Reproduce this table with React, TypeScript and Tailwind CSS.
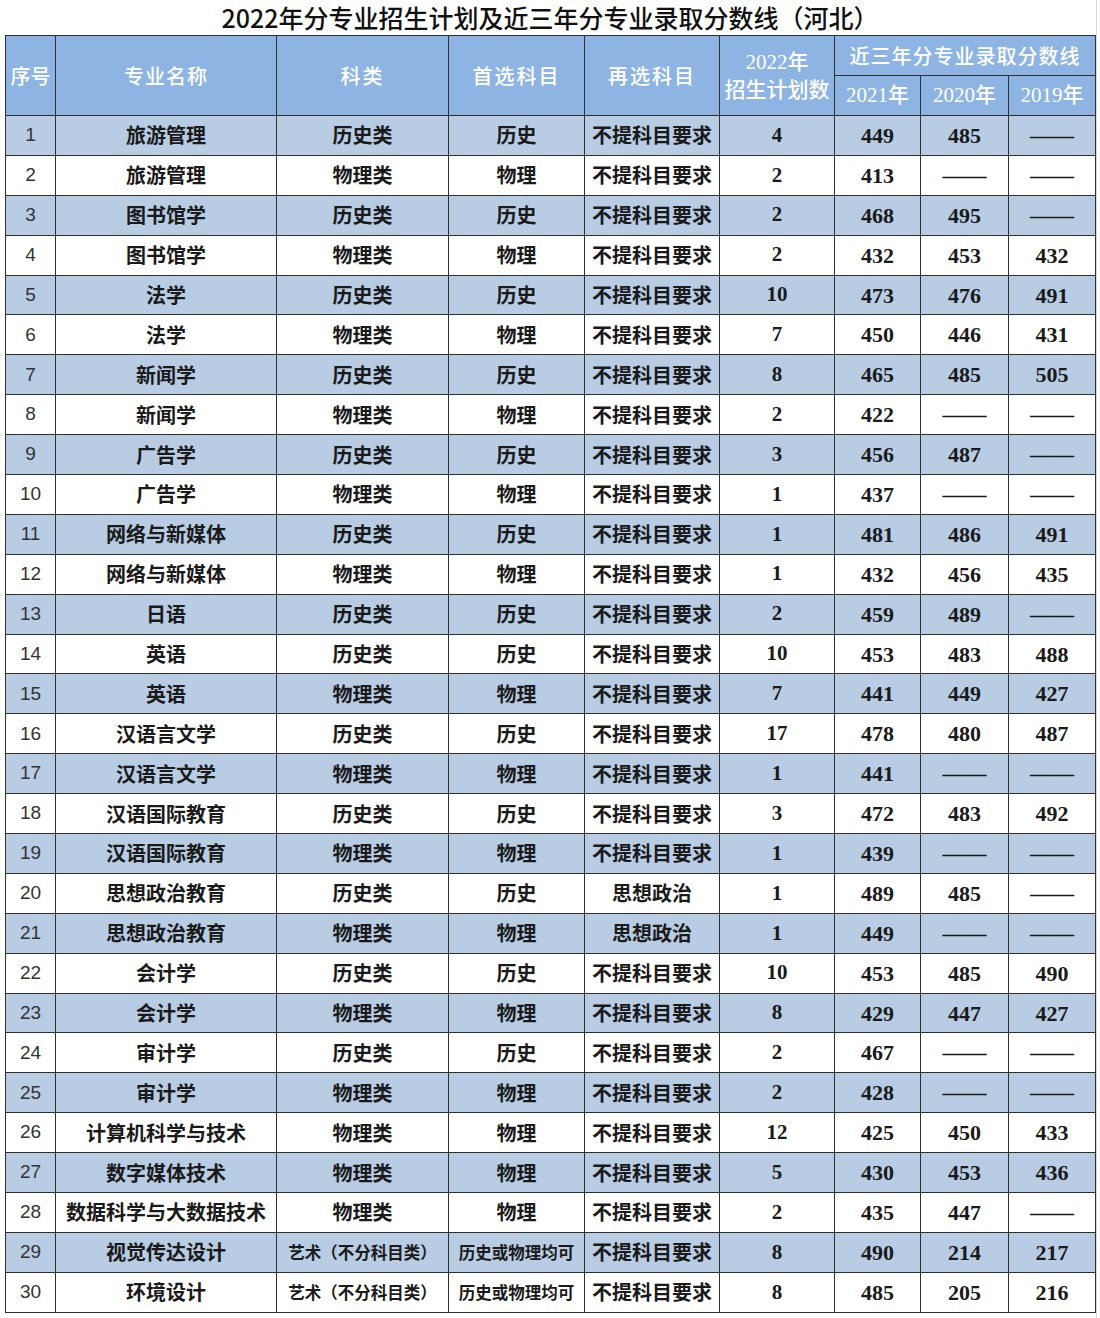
import { FC } from 'react';

type Row = [string, string, string, string, string, string, string, string];

const rows: Row[] = [
  ['旅游管理', '历史类', '历史', '不提科目要求', '4', '449', '485', '——'],
  ['旅游管理', '物理类', '物理', '不提科目要求', '2', '413', '——', '——'],
  ['图书馆学', '历史类', '历史', '不提科目要求', '2', '468', '495', '——'],
  ['图书馆学', '物理类', '物理', '不提科目要求', '2', '432', '453', '432'],
  ['法学', '历史类', '历史', '不提科目要求', '10', '473', '476', '491'],
  ['法学', '物理类', '物理', '不提科目要求', '7', '450', '446', '431'],
  ['新闻学', '历史类', '历史', '不提科目要求', '8', '465', '485', '505'],
  ['新闻学', '物理类', '物理', '不提科目要求', '2', '422', '——', '——'],
  ['广告学', '历史类', '历史', '不提科目要求', '3', '456', '487', '——'],
  ['广告学', '物理类', '物理', '不提科目要求', '1', '437', '——', '——'],
  ['网络与新媒体', '历史类', '历史', '不提科目要求', '1', '481', '486', '491'],
  ['网络与新媒体', '物理类', '物理', '不提科目要求', '1', '432', '456', '435'],
  ['日语', '历史类', '历史', '不提科目要求', '2', '459', '489', '——'],
  ['英语', '历史类', '历史', '不提科目要求', '10', '453', '483', '488'],
  ['英语', '物理类', '物理', '不提科目要求', '7', '441', '449', '427'],
  ['汉语言文学', '历史类', '历史', '不提科目要求', '17', '478', '480', '487'],
  ['汉语言文学', '物理类', '物理', '不提科目要求', '1', '441', '——', '——'],
  ['汉语国际教育', '历史类', '历史', '不提科目要求', '3', '472', '483', '492'],
  ['汉语国际教育', '物理类', '物理', '不提科目要求', '1', '439', '——', '——'],
  ['思想政治教育', '历史类', '历史', '思想政治', '1', '489', '485', '——'],
  ['思想政治教育', '物理类', '物理', '思想政治', '1', '449', '——', '——'],
  ['会计学', '历史类', '历史', '不提科目要求', '10', '453', '485', '490'],
  ['会计学', '物理类', '物理', '不提科目要求', '8', '429', '447', '427'],
  ['审计学', '历史类', '历史', '不提科目要求', '2', '467', '——', '——'],
  ['审计学', '物理类', '物理', '不提科目要求', '2', '428', '——', '——'],
  ['计算机科学与技术', '物理类', '物理', '不提科目要求', '12', '425', '450', '433'],
  ['数字媒体技术', '物理类', '物理', '不提科目要求', '5', '430', '453', '436'],
  ['数据科学与大数据技术', '物理类', '物理', '不提科目要求', '2', '435', '447', '——'],
  ['视觉传达设计', '艺术（不分科目类）', '历史或物理均可', '不提科目要求', '8', '490', '214', '217'],
  ['环境设计', '艺术（不分科目类）', '历史或物理均可', '不提科目要求', '8', '485', '205', '216'],
];

const cjk = "font-['Noto_Sans_CJK_SC',sans-serif]";
const serif = "font-['Liberation_Serif','Noto_Sans_CJK_SC',serif]";
const th = 'border-[1.5px] border-[#2f2f2f] bg-[#8db4e2] text-white text-[20px] font-medium text-center';
const td = 'border-[1.5px] border-[#2f2f2f] text-center text-[#1a1a1a] h-[39.9px] p-0 whitespace-nowrap';

const App: FC = () => {
  return (
    <div className="w-[1100px] h-[1318px] bg-white overflow-hidden relative">
      {/* Title */}
      <div className={`h-[35px] flex items-center justify-center text-[25px] font-medium text-[#111] ${cjk}`}>
        2022年分专业招生计划及近三年分专业录取分数线（河北）
      </div>
      <div className="absolute right-[3px] top-0 h-full w-px bg-[#d9d9d9]" />

      <table className="ml-[5px] w-[1090px] table-fixed border-collapse">
        <colgroup>
          <col className="w-[50px]" />
          <col className="w-[221px]" />
          <col className="w-[172px]" />
          <col className="w-[136px]" />
          <col className="w-[135px]" />
          <col className="w-[115px]" />
          <col className="w-[86px]" />
          <col className="w-[88px]" />
          <col className="w-[87px]" />
        </colgroup>
        <thead className={cjk}>
          <tr className="h-[40px]">
            <th rowSpan={2} className={th}>序号</th>
            <th rowSpan={2} className={`${th} tracking-[1px]`}>专业名称</th>
            <th rowSpan={2} className={`${th} tracking-[2px]`}>科类</th>
            <th rowSpan={2} className={`${th} tracking-[2px]`}>首选科目</th>
            <th rowSpan={2} className={`${th} tracking-[2px]`}>再选科目</th>
            <th rowSpan={2} className={`${th} leading-[26px] text-[21px] ${serif}`}>
              2022年
              <br />
              <span className={cjk}>招生计划数</span>
            </th>
            <th colSpan={3} className={`${th} tracking-[1px]`}>近三年分专业录取分数线</th>
          </tr>
          <tr className="h-[40px]">
            <th className={`${th} ${serif} text-[21px]`}>2021年</th>
            <th className={`${th} ${serif} text-[21px]`}>2020年</th>
            <th className={`${th} ${serif} text-[21px]`}>2019年</th>
          </tr>
        </thead>
        <tbody>
          {rows.map((r, i) => {
            const bg = i % 2 === 0 ? 'bg-[#b8cce4]' : 'bg-white';
            const small = r[1].length > 4;
            return (
              <tr key={i} className={bg}>
                <td className={`${td} text-[19px] text-[#333] font-['Liberation_Sans',sans-serif]`}>{i + 1}</td>
                <td className={`${td} text-[20px] font-semibold ${cjk}`}>{r[0]}</td>
                <td className={`${td} font-semibold ${cjk} ${small ? 'text-[16.5px]' : 'text-[20px]'}`}>{r[1]}</td>
                <td className={`${td} font-semibold ${cjk} ${small ? 'text-[16.5px]' : 'text-[20px]'}`}>{r[2]}</td>
                <td className={`${td} text-[20px] font-semibold ${cjk}`}>{r[3]}</td>
                <td className={`${td} text-[21px] font-bold ${serif}`}>{r[4]}</td>
                <td className={`${td} text-[22px] font-bold ${serif}`}>{r[5]}</td>
                <td className={`${td} text-[22px] font-bold ${serif}`}>{r[6]}</td>
                <td className={`${td} text-[22px] font-bold ${serif}`}>{r[7]}</td>
              </tr>
            );
          })}
        </tbody>
      </table>
    </div>
  );
};

export default App;
